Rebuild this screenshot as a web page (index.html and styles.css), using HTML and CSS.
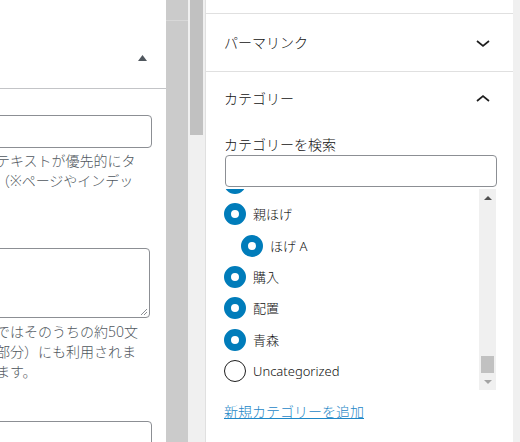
FILE: index.html
```html
<!DOCTYPE html>
<html lang="ja">
<head>
<meta charset="utf-8">
<title>カテゴリー</title>
<link rel="stylesheet" href="styles.css">
</head>
<body>
<div class="screen">
  <section class="editor">
    <div class="meta-head">
      <svg class="sort-tri" width="9" height="6" viewBox="0 0 9 6"><polygon points="0,6 4.5,0 9,6" fill="#50575e"/></svg>
    </div>
    <div class="meta-body">
      <div class="field f-input"></div>
      <p class="help help-one"><span>テキストが優先的にタ</span><span>（※ページやインデッ</span></p>
      <div class="field f-textarea">
        <svg class="grip" width="8" height="8" viewBox="0 0 8 8"><path d="M7 1L1 7M7 4L4 7" stroke="#8c8f94" stroke-width="1" fill="none"/></svg>
      </div>
      <p class="help help-two"><span>ではそのうちの約50文</span><span>部分）にも利用されま</span><span>ます。</span></p>
      <div class="field f-bottom"></div>
    </div>
  </section>
  <div class="gutter"><div class="gutter-line"></div></div>
  <div class="vscroll"><div class="vthumb"></div></div>
  <aside class="sidebar">
    <div class="sb-top"></div>
    <div class="panel">
      <div class="panel-head tall">
        <span>パーマリンク</span>
        <svg class="chev" width="24" height="24" viewBox="0 0 24 24"><polyline points="6,10 12,15 18,10" fill="none" stroke="#1e1e1e" stroke-width="1.7"/></svg>
      </div>
    </div>
    <div class="panel open">
      <div class="panel-head">
        <span>カテゴリー</span>
        <svg class="chev" width="24" height="24" viewBox="0 0 24 24"><polyline points="6,14 12,9 18,14" fill="none" stroke="#1e1e1e" stroke-width="1.7"/></svg>
      </div>
      <div class="panel-body">
        <label class="search-label">カテゴリーを検索</label>
        <div class="search-input"></div>
        <div class="cat-list">
          <div class="cat-items">
            <ul class="cat-inner">
              <li class="cat"><span class="radio on"></span><span></span></li>
              <li class="cat"><span class="radio on"></span><span>親ほげ</span></li>
              <li class="cat child"><span class="radio on"></span><span>ほげ A</span></li>
              <li class="cat"><span class="radio on"></span><span>購入</span></li>
              <li class="cat"><span class="radio on"></span><span>配置</span></li>
              <li class="cat"><span class="radio on"></span><span>青森</span></li>
              <li class="cat"><span class="radio"></span><span>Uncategorized</span></li>
            </ul>
          </div>
          <div class="list-scroll">
            <div class="sb-btn"><span class="tri-up"></span></div>
            <div class="sb-track"><div class="sb-thumb"></div></div>
            <div class="sb-btn"><span class="tri-down"></span></div>
          </div>
        </div>
        <a class="add-link" href="#">新規カテゴリーを追加</a>
      </div>
    </div>
  </aside>
  <div class="edge"></div>
</div>
</body>
</html>
```
FILE: styles.css
```css
html, body {
  margin: 0;
  padding: 0;
}
body {
  width: 520px;
  height: 442px;
  overflow: hidden;
  background: #fff;
  font-family: "Noto Sans", "Noto Sans CJK JP", sans-serif;
  font-weight: 300;
  color: #111;
}
.screen {
  display: flex;
  height: 442px;
}

/* left editor area */
.editor {
  width: 166px;
  flex: none;
  overflow: hidden;
  background: #fff;
}
.meta-head {
  height: 89px;
  box-sizing: border-box;
  border-bottom: 1px solid #c3c4c7;
  display: flex;
  justify-content: flex-end;
  align-items: flex-start;
  padding: 55px 19px 0 0;
}
.sort-tri {
  display: block;
}
.meta-body {
  display: flex;
  flex-direction: column;
}
.field {
  box-sizing: border-box;
  border: 1px solid #8c8f94;
  border-radius: 4px;
  margin-left: -20px;
  margin-right: 14px;
  background: #fff;
  flex: none;
}
.f-input {
  height: 33px;
  margin-top: 26px;
}
.f-textarea {
  height: 70px;
  margin-top: 57px;
  margin-right: 16px;
  display: flex;
  justify-content: flex-end;
  align-items: flex-end;
  padding: 0 1px 1px 0;
}
.grip {
  display: block;
}
.f-bottom {
  height: 40px;
  margin-top: 39px;
}
.help {
  margin: 3px 0 0 -4px;
  font-size: 14px;
  line-height: 20px;
  color: #50575e;
  white-space: nowrap;
}
.help span {
  display: block;
}
.help-two {
  margin-top: 4px;
}

/* middle strips */
.gutter {
  width: 22px;
  flex: none;
  background: #cbcbcb;
}
.gutter-line {
  height: 1px;
  margin-top: 20px;
  background: #d8d8d8;
}
.vscroll {
  width: 17px;
  flex: none;
  background: #f0f0f0;
}
.vthumb {
  width: 13px;
  height: 135px;
  margin-left: 2px;
  background: #c1c1c1;
}

/* sidebar */
.sidebar {
  width: 308px;
  flex: none;
  box-sizing: border-box;
  border-left: 1px solid #e0e0e0;
  background: #fff;
}
.sb-top {
  height: 14px;
  box-sizing: border-box;
  border-bottom: 1px solid #e0e0e0;
}
.panel {
  border-bottom: 1px solid #e0e0e0;
}
.panel.open {
  border-bottom: none;
}
.panel-head {
  height: 54px;
  display: flex;
  align-items: center;
  justify-content: space-between;
  padding: 0 18px 0 18px;
  font-size: 14px;
  line-height: 20px;
  color: #111;
}
.panel-head.tall {
  height: 57px;
}
.chev {
  display: block;
  flex: none;
}
.panel-body {
  padding: 9px 16px 0 18px;
}
.search-label {
  display: block;
  font-size: 14px;
  line-height: 20px;
  color: #111;
}
.search-input {
  height: 32px;
  box-sizing: border-box;
  border: 1px solid #8c8f94;
  border-radius: 4px;
  margin-left: 1px;
  background: #fff;
}
.cat-list {
  display: flex;
  height: 201px;
  margin-top: 2px;
  margin-right: 1px;
}
.cat-items {
  flex: 1;
  overflow: hidden;
}
.cat-inner {
  list-style: none;
  margin: -21.6px 0 0 0;
  padding: 0;
}
.cat {
  display: flex;
  align-items: center;
  gap: 7px;
  height: 31.3px;
  font-size: 13px;
  line-height: 18px;
  color: #111;
}
.cat.child {
  padding-left: 17px;
}
.radio {
  width: 22px;
  height: 22px;
  box-sizing: border-box;
  border-radius: 50%;
  border: 1px solid #1e1e1e;
  background: #fff;
  flex: none;
}
.radio.on {
  border: 7px solid #007cba;
}
.list-scroll {
  width: 17px;
  flex: none;
  display: flex;
  flex-direction: column;
  background: #f0f0f0;
}
.sb-btn {
  height: 17px;
  display: flex;
  align-items: center;
  justify-content: center;
  flex: none;
}
.tri-up {
  width: 0;
  height: 0;
  border-left: 4px solid transparent;
  border-right: 4px solid transparent;
  border-bottom: 4px solid #505050;
}
.tri-down {
  width: 0;
  height: 0;
  border-left: 4px solid transparent;
  border-right: 4px solid transparent;
  border-top: 4px solid #a3a3a3;
}
.sb-track {
  flex: 1;
  display: flex;
  flex-direction: column;
  justify-content: flex-end;
  align-items: center;
}
.sb-thumb {
  width: 13px;
  height: 17px;
  background: #c1c1c1;
}
.add-link {
  display: inline-block;
  margin-top: 12px;
  font-size: 14px;
  line-height: 20px;
  color: #1d87c7;
  text-decoration: underline;
}
.edge {
  width: 7px;
  flex: none;
  background: #f0f0f0;
}
```
